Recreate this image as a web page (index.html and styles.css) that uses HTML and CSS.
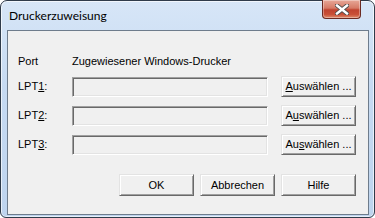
FILE: index.html
```html
<!DOCTYPE html>
<html lang="de">
<head>
<meta charset="utf-8">
<title>Druckerzuweisung</title>
<link rel="stylesheet" href="styles.css">
</head>
<body>
<div class="window">
  <div class="titlebar">
    <span class="title">Druckerzuweisung</span>
    <div class="close">
      <svg width="14" height="11" viewBox="0 0 14 11">
        <path d="M2 1.5 L12 9.5 M12 1.5 L2 9.5" stroke="#4a4a4a" stroke-width="4.2" stroke-linecap="square"/>
        <path d="M2 1.5 L12 9.5 M12 1.5 L2 9.5" stroke="#ffffff" stroke-width="2.4" stroke-linecap="square"/>
      </svg>
    </div>
  </div>
  <div class="client">
    <div class="header">
      <span class="col-label">Port</span>
      <span>Zugewiesener Windows-Drucker</span>
    </div>
    <div class="grid">
      <span class="label">LPT<u>1</u>:</span>
      <div class="field"></div>
      <button class="btn"><u>A</u>uswählen ...</button>
      <span class="label">LPT<u>2</u>:</span>
      <div class="field"></div>
      <button class="btn">A<u>u</u>swählen ...</button>
      <span class="label">LPT<u>3</u>:</span>
      <div class="field"></div>
      <button class="btn">Au<u>s</u>wählen ...</button>
    </div>
    <div class="actions">
      <button class="btn">OK</button>
      <button class="btn">Abbrechen</button>
      <button class="btn">Hilfe</button>
    </div>
  </div>
</div>
</body>
</html>
```
FILE: styles.css
```css
html, body {
  margin: 0;
  padding: 0;
  background: #ffffff;
}
.window {
  width: 375px;
  height: 218px;
  box-sizing: border-box;
  border: 1px solid #2f3b4a;
  border-radius: 7px 7px 6px 6px;
  background: linear-gradient(180deg, #d7e6f7 0%, #c6daf2 40%, #bed4ee 100%);
  box-shadow: inset 0 0 0 1px rgba(255,255,255,0.65);
  padding: 0 5px 2px 6px;
  display: flex;
  flex-direction: column;
  font-family: "Liberation Sans", Arial, sans-serif;
  font-size: 11px;
  color: #000;
}
.titlebar {
  height: 29px;
  display: flex;
  align-items: flex-start;
  justify-content: space-between;
}
.title {
  font-family: Lato, "Noto Sans", sans-serif;
  font-size: 12px;
  line-height: 16px;
  margin-top: 7px;
  padding-left: 2px;
  color: #000;
}
.close {
  width: 39px;
  height: 19px;
  box-sizing: border-box;
  margin-top: -1px;
  margin-right: 8px;
  border: 1px solid #6b2a22;
  border-top: none;
  border-radius: 0 0 4px 4px;
  background: linear-gradient(180deg, #e7a898 0%, #d67a66 45%, #c0432f 55%, #c94f36 80%, #de8a6a 100%);
  box-shadow: inset 0 0 0 1px rgba(255,255,255,0.35);
  display: flex;
  align-items: center;
  justify-content: center;
}
.client {
  flex: 1;
  border: 1px solid #6e7c8c;
  background: #f0f0f0;
  padding: 24px 12px 0 10px;
  display: flex;
  flex-direction: column;
}
.header {
  display: flex;
  line-height: 13px;
  height: 13px;
}
.col-label {
  width: 54px;
}
.grid {
  margin-top: 8px;
  display: grid;
  grid-template-columns: 54px 196px 1fr;
  row-gap: 8px;
  grid-auto-rows: 21px;
  align-items: center;
}
.grid .btn {
  justify-self: end;
}
.label {
  line-height: 13px;
}
.label u {
  text-decoration-thickness: 1px;
  text-underline-offset: 1px;
}
.field {
  height: 20px;
  box-sizing: border-box;
  align-self: start;
  margin-top: 1px;
  background: #f0f0f0;
  border-top: 1px solid #a0a0a0;
  border-left: 1px solid #a0a0a0;
  border-right: 1px solid #ffffff;
  border-bottom: 1px solid #ffffff;
  box-shadow: inset 1px 1px 0 #696969, inset -1px -1px 0 #e3e3e3;
}
.btn {
  width: 75px;
  height: 21px;
  box-sizing: border-box;
  padding: 0;
  margin: 0;
  background: #f0f0f0;
  font-family: "Liberation Sans", Arial, sans-serif;
  font-size: 11px;
  color: #000;
  border-top: 1px solid #e3e3e3;
  border-left: 1px solid #e3e3e3;
  border-right: 1px solid #696969;
  border-bottom: 1px solid #696969;
  box-shadow: inset 1px 1px 0 #ffffff, inset -1px -1px 0 #a0a0a0;
  border-radius: 0;
  text-align: center;
  line-height: 17px;
}
.btn u {
  text-decoration-thickness: 1px;
}
.actions {
  margin-top: 19px;
  display: flex;
  justify-content: flex-end;
  gap: 6px;
}
.actions .btn {
  height: 22px;
  line-height: 18px;
}
```
